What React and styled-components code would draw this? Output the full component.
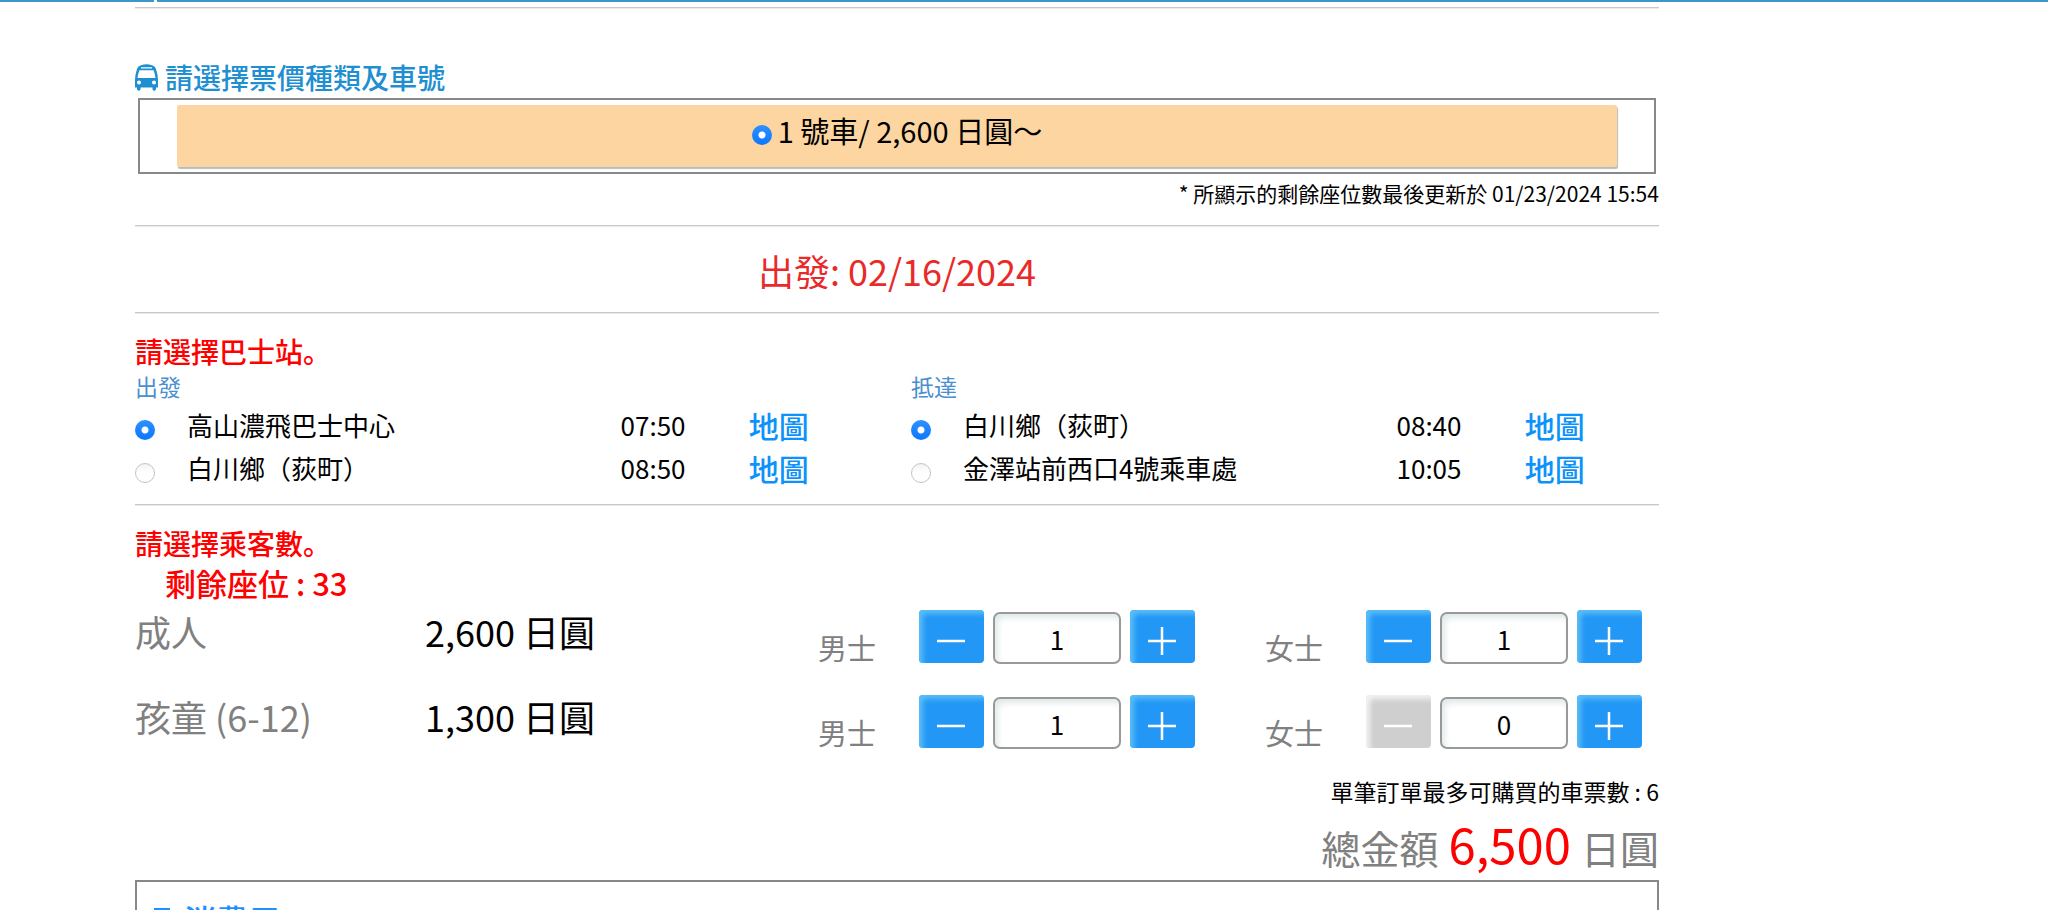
import React, { useState } from 'react';
import styled, { createGlobalStyle } from 'styled-components';

const GlobalStyle = createGlobalStyle`
  *, *::before, *::after {
    box-sizing: border-box;
  }

  html, body {
    margin: 0;
    height: 100%;
    overflow: hidden;
    background: #fff;
  }

  body, button, input {
    font-family: "Noto Sans CJK JP", "Noto Sans", sans-serif;
    color: #000;
  }
`;

const TopBar = styled.div`
  display: flex;
  gap: 3px;
  height: 2px;

  &::before {
    content: '';
    flex: 0 0 154px;
    background: #3f97c7;
  }

  &::after {
    content: '';
    flex: 1;
    background: #3f97c7;
  }
`;

const Page = styled.main`
  padding: 5px 19% 0 135px;
`;

const Divider = styled.hr`
  margin: 0;
  border: 0;
  border-top: 1px solid #c8c8c8;
  border-bottom: 1px solid #ebebeb;
`;

const Heading = styled.h2`
  display: flex;
  align-items: center;
  gap: 7px;
  margin: 0;
  font-size: 28px;
  line-height: 38px;
  font-weight: 500;
  color: ${(props) => (props.$alert ? '#ff0000' : '#1f8fd2')};
`;

const FareSection = styled.section`
  padding-top: 49px;
  padding-bottom: 13px;
`;

const FareFrame = styled.div`
  margin: 2px 3px 0;
  padding: 5px 37px;
  border: 2px solid #888;
`;

const FareOption = styled.label`
  display: flex;
  align-items: center;
  justify-content: center;
  gap: 6px;
  height: 62px;
  padding-bottom: 12px;
  border-radius: 2px;
  background: #fdd5a1;
  box-shadow: 1px 2px 1px #b8bcc2;
  font-size: 29px;
  line-height: 42px;
`;

const Radio = styled.input.attrs({ type: 'radio' })`
  appearance: none;
  flex: none;
  width: 20px;
  height: 20px;
  margin: 10px 0 0;
  border: 1px solid #c4c4c4;
  border-radius: 50%;
  background: linear-gradient(#f2f2f2, #fff 50%);

  &:checked {
    border: 0;
    background: radial-gradient(circle, #fff 0 3px, transparent 4px),
      linear-gradient(#2f90ff, #0a78ff);
  }
`;

const Note = styled.p`
  margin: 0;
  font-size: 21px;
  line-height: 38px;
  text-align: right;
`;

const LimitNote = styled(Note)`
  margin-top: 19px;
  font-size: 23px;
`;

const DepartureDate = styled.p`
  margin: 0;
  padding: 18px 0 17px;
  font-size: 36px;
  line-height: 50px;
  text-align: center;
  color: #e82a2a;
`;

const StopSection = styled.section`
  padding: 18px 0 15px;
`;

const StopColumns = styled.div`
  display: grid;
  grid-template-columns: 1fr 1fr;
  gap: 28px;
`;

const StopGroup = styled.fieldset`
  min-width: 0;
  margin: 0;
  padding: 0;
  border: 0;
`;

const StopLegend = styled.legend`
  padding: 0;
  font-size: 23px;
  line-height: 33px;
  color: #4a8fd0;
`;

const StopRow = styled.div`
  display: grid;
  grid-template-columns: 52px 433fr 128fr 134fr;
  align-items: center;
  height: 43px;
  font-size: 26px;
  line-height: 40px;
`;

const MapLink = styled.a`
  font-size: 30px;
  font-weight: 500;
  line-height: 38px;
  color: #0c92fb;
  text-decoration: none;
`;

const PassengerSection = styled.section`
  padding-top: 18px;
`;

const SeatsLeft = styled.p`
  margin: 0 0 6px;
  padding-left: 30px;
  font-size: 31px;
  line-height: 42px;
  font-weight: 500;
  color: #ff0000;
`;

const PassengerRows = styled.div`
  display: grid;
  gap: 27px;
`;

const PassengerRow = styled.div`
  display: grid;
  grid-template-columns: 290fr 393fr 447fr 394fr;
  align-items: start;
`;

const Category = styled.span`
  font-size: 36px;
  line-height: 42px;
  color: #808080;
`;

const Price = styled.span`
  font-size: 36px;
  line-height: 42px;
`;

const CounterWrap = styled.div`
  display: flex;
  align-items: flex-start;
`;

const GenderLabel = styled.label`
  flex: 0 0 101px;
  padding-top: 16px;
  font-size: 29px;
  line-height: 42px;
  color: #808080;
`;

const StepButton = styled.button`
  display: grid;
  place-items: center;
  width: 65px;
  height: 53px;
  padding: 8px 0 0;
  border: 0;
  border-radius: 4px;
  background: #2397f5;
  box-shadow: inset 4px 4px 5px #59bdf8;

  &:disabled {
    background: #cfcfcf;
    box-shadow: inset 4px 4px 5px #f2f2f2;
  }
`;

const CountInput = styled.input`
  width: 128px;
  height: 52px;
  margin: 2px 9px 0;
  padding: 0;
  border: 2px solid #999;
  border-radius: 7px;
  background: #fff;
  box-shadow: inset 3px 4px 6px #dfe9ea;
  font-size: 26px;
  text-align: center;
`;

const Total = styled.p`
  display: flex;
  justify-content: flex-end;
  align-items: baseline;
  gap: 10px;
  margin: 0;
  font-size: 39px;
  line-height: 65px;
  color: #808080;
`;

const Amount = styled.strong`
  font-size: 49px;
  font-weight: 400;
  color: #ff0000;
`;

const InfoBox = styled.section`
  padding: 18px 17px;
  border: 2px solid #888;
`;

const InfoHeading = styled(Heading)`
  gap: 14px;
  font-size: 32px;
  color: #1e90ff;
`;

const BusIcon = () => (
  <svg width="23" height="27" viewBox="0 0 23 27" aria-hidden="true">
    <path
      fill="#1f8fd2"
      fillRule="evenodd"
      d="M6 1.2Q11.5-.8 17 1.2Q20 2 21 5Q23 11 23 16V23.5H21V25.5Q19 28 17.5 25.5V23.5H5.5V25.5Q4 28 2 25.5V23.5H0V16Q0 11 2 5Q3 2 6 1.2ZM6 3.2V4.5H17V3.2ZM4.5 6.2Q2.8 10 2.5 14H20.5Q20.2 10 18.5 6.2ZM4 16.5A2 2 0 1 0 4 20.5A2 2 0 1 0 4 16.5ZM19 16.5A2 2 0 1 0 19 20.5A2 2 0 1 0 19 16.5Z"
    />
  </svg>
);

const StepIcon = ({ plus }) => (
  <svg width="28" height="28" viewBox="0 0 28 28" stroke="#fff" strokeWidth="2.5" aria-hidden="true">
    <path d={plus ? 'M0 14H28M14 0V28' : 'M0 14H28'} />
  </svg>
);

const TicketIcon = () => (
  <svg width="16" height="26" viewBox="0 0 16 26" aria-hidden="true">
    <path d="M0 2H16V25H0Z" fill="#1e90ff" />
  </svg>
);

const departures = [
  { name: '高山濃飛巴士中心', time: '07:50' },
  { name: '白川鄉（荻町）', time: '08:50' },
];

const arrivals = [
  { name: '白川鄉（荻町）', time: '08:40' },
  { name: '金澤站前西口4號乘車處', time: '10:05' },
];

const fares = [
  { id: 'adult', name: '成人', price: 2600 },
  { id: 'child', name: '孩童 (6-12)', price: 1300 },
];

const genders = [
  { id: 'male', name: '男士' },
  { id: 'female', name: '女士' },
];

const MAX_TICKETS = 6;

function Stops({ id, title, stops }) {
  const [selected, setSelected] = useState(0);

  return (
    <StopGroup>
      <StopLegend>{title}</StopLegend>
      {stops.map((stop, index) => (
        <StopRow key={stop.name}>
          <Radio
            id={`${id}-${index}`}
            name={id}
            checked={selected === index}
            onChange={() => setSelected(index)}
          />
          <label htmlFor={`${id}-${index}`}>{stop.name}</label>
          <span>{stop.time}</span>
          <MapLink href="#map">地圖</MapLink>
        </StopRow>
      ))}
    </StopGroup>
  );
}

function Counter({ id, label, value, canAdd, onChange }) {
  return (
    <CounterWrap>
      <GenderLabel htmlFor={id}>{label}</GenderLabel>
      <StepButton type="button" aria-label="-" disabled={value === 0} onClick={() => onChange(value - 1)}>
        <StepIcon />
      </StepButton>
      <CountInput id={id} value={value} readOnly />
      <StepButton type="button" aria-label="+" onClick={() => canAdd && onChange(value + 1)}>
        <StepIcon plus />
      </StepButton>
    </CounterWrap>
  );
}

function App() {
  const [counts, setCounts] = useState({
    'adult-male': 1,
    'adult-female': 1,
    'child-male': 1,
    'child-female': 0,
  });

  const tickets = Object.values(counts).reduce((sum, count) => sum + count, 0);
  const total = fares.reduce(
    (sum, fare) => sum + fare.price * (counts[`${fare.id}-male`] + counts[`${fare.id}-female`]),
    0
  );

  return (
    <>
      <GlobalStyle />
      <TopBar />
      <Page>
        <Divider />
        <FareSection>
          <Heading>
            <BusIcon />
            請選擇票價種類及車號
          </Heading>
          <FareFrame>
            <FareOption>
              <Radio name="bus" defaultChecked />
              1 號車/ 2,600 日圓～
            </FareOption>
          </FareFrame>
          <Note>* 所顯示的剩餘座位數最後更新於 01/23/2024 15:54</Note>
        </FareSection>
        <Divider />
        <DepartureDate>出發: 02/16/2024</DepartureDate>
        <Divider />
        <StopSection>
          <Heading $alert>請選擇巴士站。</Heading>
          <StopColumns>
            <Stops id="departure" title="出發" stops={departures} />
            <Stops id="arrival" title="抵達" stops={arrivals} />
          </StopColumns>
        </StopSection>
        <Divider />
        <PassengerSection>
          <Heading $alert>請選擇乘客數。</Heading>
          <SeatsLeft>剩餘座位 : 33</SeatsLeft>
          <PassengerRows>
            {fares.map((fare) => (
              <PassengerRow key={fare.id}>
                <Category>{fare.name}</Category>
                <Price>{fare.price.toLocaleString('en-US')} 日圓</Price>
                {genders.map((gender) => {
                  const key = `${fare.id}-${gender.id}`;
                  return (
                    <Counter
                      key={key}
                      id={key}
                      label={gender.name}
                      value={counts[key]}
                      canAdd={tickets < MAX_TICKETS}
                      onChange={(value) => setCounts({ ...counts, [key]: value })}
                    />
                  );
                })}
              </PassengerRow>
            ))}
          </PassengerRows>
          <LimitNote>單筆訂單最多可購買的車票數 : {MAX_TICKETS}</LimitNote>
          <Total>
            總金額
            <Amount>{total.toLocaleString('en-US')}</Amount>
            日圓
          </Total>
        </PassengerSection>
        <InfoBox>
          <InfoHeading>
            <TicketIcon />
            消費用
          </InfoHeading>
        </InfoBox>
      </Page>
    </>
  );
}

export default App;
